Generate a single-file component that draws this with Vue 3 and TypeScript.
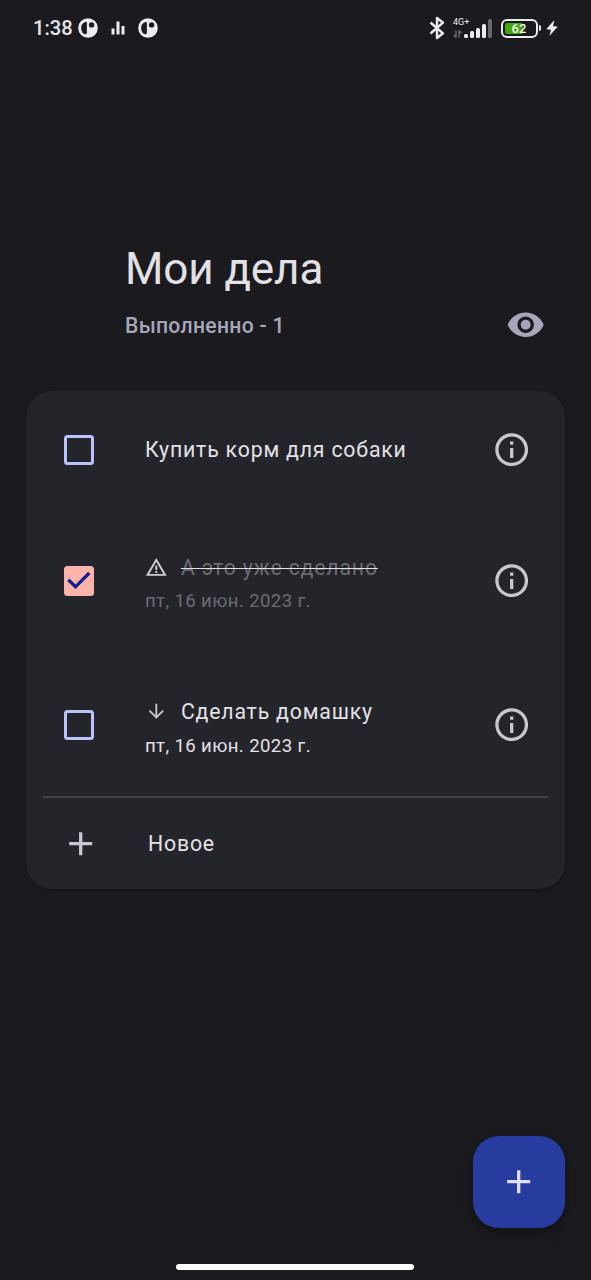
<script setup lang="ts">
interface Task {
  id: number
  title: string
  date?: string
  done?: boolean
  priority?: 'high' | 'low'
}

const tasks: Task[] = [
  { id: 1, title: 'Купить корм для собаки' },
  { id: 2, title: 'А это уже сделано', date: 'пт, 16 июн. 2023 г.', done: true, priority: 'high' },
  { id: 3, title: 'Сделать домашку', date: 'пт, 16 июн. 2023 г.', priority: 'low' },
]
const doneCount = tasks.filter((t) => t.done).length
const bars = [4, 7.5, 10.5, 14, 19]
</script>

<template>
  <div class="screen">
    <div class="status">
      <div class="status-left">
        <span class="clock">1:38</span>
        <svg class="app-dot" viewBox="0 0 20 20">
          <circle cx="10" cy="10" r="9.8" fill="#ececf0" />
          <path d="M8.9 4C5.4 3.8 3.2 6.3 3.2 10s2 6.4 4.4 6.2c1.2-.2 1.3-1.2 1.3-2.3z" fill="#1b1b1f" />
          <circle cx="13.6" cy="6.9" r="2.7" fill="#1b1b1f" />
        </svg>
        <svg class="chart" viewBox="0 0 14 14">
          <path d="M2 13.4V7.4M7 13.4V.6M12 13.4V5" stroke="#ececf0" stroke-width="3" />
        </svg>
        <svg class="app-dot" viewBox="0 0 20 20">
          <circle cx="10" cy="10" r="9.8" fill="#ececf0" />
          <path d="M8.9 4C5.4 3.8 3.2 6.3 3.2 10s2 6.4 4.4 6.2c1.2-.2 1.3-1.2 1.3-2.3z" fill="#1b1b1f" />
          <circle cx="13.6" cy="6.9" r="2.7" fill="#1b1b1f" />
        </svg>
      </div>
      <div class="status-right">
        <svg class="bt" viewBox="0 0 16 24">
          <path d="M1.5 6.5 14 17.3 8 22V2l6 4.7L1.5 17.5" fill="none" stroke="#ececf0" stroke-width="2.4" stroke-linejoin="round" />
        </svg>
        <div class="signal">
          <div class="net">
            <span class="net-label">4G+</span>
            <svg class="updown" viewBox="0 0 9 8">
              <path d="M3 .5v7M3 7.5.6 4.8M6 7.5v-7M6 .5l2.4 2.7" fill="none" stroke="#6c6c72" stroke-width="1.4" />
            </svg>
          </div>
          <div class="bars">
            <i v-for="(h, i) in bars" :key="i" class="bar" :class="{ dim: i === 4 }" :style="{ height: h + 'px' }"></i>
          </div>
        </div>
        <div class="battery"><span class="level"></span><span class="percent">62</span></div>
        <span class="cap"></span>
        <svg class="bolt" viewBox="0 0 12 16">
          <path d="M8.4 0 .2 9.3l4.8.4L3.4 16 11.8 6.6 7 6.2z" fill="#ececf0" />
        </svg>
      </div>
    </div>

    <header class="header">
      <h1>Мои дела</h1>
      <div class="subhead">
        <span class="subtitle">Выполненно - {{ doneCount }}</span>
        <svg class="icon24" viewBox="0 0 24 24">
          <path fill="#a5a6b9" d="M12 4.5C7 4.5 2.73 7.61 1 12c1.73 4.39 6 7.5 11 7.5s9.27-3.11 11-7.5c-1.73-4.39-6-7.5-11-7.5zM12 17c-2.76 0-5-2.24-5-5s2.24-5 5-5 5 2.24 5 5-2.24 5-5 5zm0-8c-1.66 0-3 1.34-3 3s1.34 3 3 3 3-1.34 3-3-1.34-3-3-3z" />
        </svg>
      </div>
    </header>

    <main class="card">
      <div v-for="t in tasks" :key="t.id" class="row" :class="{ tall: t.date, done: t.done }">
        <span class="check">
          <svg v-if="t.done" viewBox="0 0 30 30">
            <path d="M4.3 13.8 11.5 20.8 25.3 7" fill="none" stroke="#15208c" stroke-width="3.3" />
          </svg>
        </span>
        <div class="body">
          <div class="title-line">
            <svg v-if="t.priority === 'high'" class="prio" viewBox="0 0 24 24">
              <path fill="#d0cfd8" d="M12 5.99 19.53 19H4.47L12 5.99M12 2 1 21h22L12 2zm1 14h-2v2h2v-2zm0-6h-2v4.8h2V10z" />
            </svg>
            <svg v-if="t.priority === 'low'" class="prio" viewBox="0 0 24 24">
              <path fill="#c8c7d1" d="m20 12-1.41-1.41L13 16.17V4h-2v12.17l-5.58-5.59L4 12l8 8 8-8z" />
            </svg>
            <span class="title">{{ t.title }}</span>
          </div>
          <div v-if="t.date" class="date">{{ t.date }}</div>
        </div>
        <svg class="icon24" viewBox="0 0 24 24">
          <path fill="#c8c7d1" d="M11 7h2v2h-2zm0 4h2v6h-2zm1-9C6.48 2 2 6.48 2 12s4.48 10 10 10 10-4.48 10-10S17.52 2 12 2zm0 18c-4.41 0-8-3.59-8-8s3.59-8 8-8 8 3.59 8 8-3.59 8-8 8z" />
        </svg>
      </div>
      <div class="divider"></div>
      <div class="new-row">
        <svg class="icon24" viewBox="0 0 24 24"><path fill="#c8c7d1" d="M19 13h-6v6h-2v-6H5v-2h6V5h2v6h6v2z" /></svg>
        <span class="new-label">Новое</span>
      </div>
    </main>

    <button class="fab">
      <svg class="icon24" viewBox="0 0 24 24"><path fill="#dfe0ff" d="M19 13h-6v6h-2v-6H5v-2h6V5h2v6h6v2z" /></svg>
    </button>
    <div class="home-bar"></div>
  </div>
</template>

<style>
body { background: #1b1b1f; }
</style>

<style scoped>
.screen {
  box-sizing: border-box;
  width: 591px;
  height: 1280px;
  background: #1b1b1f;
  color: #e4e1e6;
  font-family: Roboto, "Noto Sans", sans-serif;
  display: flex;
  flex-direction: column;
  overflow: hidden;
}
svg { display: block; flex: none; }
.icon24 { width: 39.4px; height: 39.4px; }
.status {
  height: 56px;
  padding: 0 33px 0 33px;
  display: flex;
  justify-content: space-between;
  align-items: center;
}
.status-left, .status-right { display: flex; align-items: center; }
.clock { font-size: 20.2px; font-weight: 500; width: 45px; color: #e4e4e8; white-space: nowrap; }
.app-dot { width: 20px; height: 20px; }
.chart { width: 14px; height: 14px; margin: 0 13px; }
.bt { width: 16px; height: 24px; margin-right: 8px; }
.signal { display: flex; align-items: flex-end; height: 20px; }
.net { width: 11px; height: 20px; display: flex; flex-direction: column; justify-content: space-between; }
.net-label { font-size: 9px; line-height: 9px; font-weight: 400; color: #ececf0; white-space: nowrap; }
.updown { width: 9px; height: 8px; }
.bars { display: flex; gap: 2.4px; align-items: flex-end; }
.bar { width: 3.6px; border-radius: 1.5px; background: #ececf0; }
.bar.dim { background: #66666b; }
.battery {
  box-sizing: border-box;
  position: relative;
  width: 37px;
  height: 19px;
  margin-left: 9px;
  border: 2.5px solid #ececf0;
  border-radius: 6px;
  padding: 2px;
}
.level { display: block; width: 18px; height: 11px; border-radius: 2px; background: #44a50c; }
.percent {
  position: absolute;
  inset: 0;
  text-align: center;
  font-size: 13px;
  line-height: 15px;
  font-weight: 500;
  color: #f4f4f6;
}
.cap { width: 2px; height: 6px; margin-left: 1.5px; border-radius: 0 2px 2px 0; background: #ececf0; }
.bolt { width: 12px; height: 16px; margin-left: 5px; }

.header { height: 335px; box-sizing: border-box; padding: 187px 46px 0 125px; }
h1 { margin: 0; font-size: 44px; font-weight: 400; line-height: 52px; letter-spacing: -0.1px; }
.subhead { display: flex; justify-content: space-between; align-items: center; height: 39.4px; margin-top: 10.3px; }
.subtitle { padding-top: 1px; font-size: 21.2px; font-weight: 500; letter-spacing: 0.28px; color: #a5a6b9; white-space: nowrap; }

.card {
  box-sizing: border-box;
  width: 538.5px;
  height: 498px;
  margin-left: 26.3px;
  flex: none;
  border-radius: 26px;
  background: #24252b;
  box-shadow: 0 1px 3px rgba(0, 0, 0, 0.3);
}
.row { display: flex; align-items: center; height: 117.5px; padding: 0 33px 0 37.7px; }
.row.tall { height: 144.4px; }
.check {
  box-sizing: border-box;
  width: 30px;
  height: 30px;
  flex: none;
  border: 3.3px solid #bbc3ff;
  border-radius: 3.5px;
}
.done .check { border: 0; background: #ffb4ab; }
.body { flex: 1; margin-left: 51px; white-space: nowrap; }
.tall .body { padding-top: 7px; }
.title-line { display: flex; align-items: center; height: 34px; }
.prio { width: 22.6px; height: 22.6px; margin: 0 13.7px 0 -0.4px; }
.title { font-size: 21.3px; letter-spacing: 0.8px; }
.date { font-size: 18.6px; letter-spacing: 0.38px; line-height: 34px; }
.done .title { color: #6c6c70; text-decoration: line-through #e4e1e6 1px; }
.done .date { color: #6c6c70; }
.divider { height: 2px; margin: -1px 17px 0; background: #46464f; opacity: 0.85; }
.new-row { display: flex; align-items: center; height: 91px; padding-left: 34.3px; }
.new-label { margin: -1px 0 0 48px; font-size: 21.3px; letter-spacing: 0.8px; }

.fab {
  width: 92px;
  height: 92px;
  flex: none;
  margin: 246.6px 0 0 472.5px;
  padding: 0;
  border: 0;
  border-radius: 26px;
  background: #283b9f;
  display: flex;
  align-items: center;
  justify-content: center;
  box-shadow: 0 8px 14px rgba(0, 0, 0, 0.2), 0 3px 5px rgba(0, 0, 0, 0.15);
}
.home-bar { width: 238px; height: 6px; margin: 36px 0 0 176px; border-radius: 3px; background: #fff; flex: none; }
</style>
